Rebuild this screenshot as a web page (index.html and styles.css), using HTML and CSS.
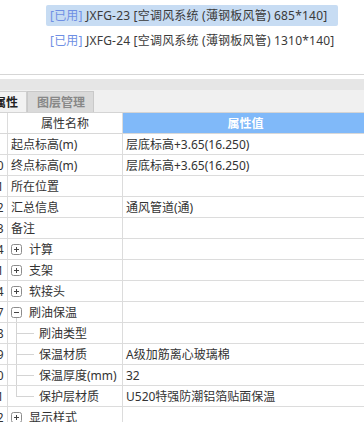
FILE: index.html
```html
<!DOCTYPE html>
<html>
<head>
<meta charset="utf-8">
<link rel="stylesheet" href="styles.css">
</head>
<body>
<div class="popup">
  <div class="list">
    <div class="item sel"><span class="tag">[已用]</span> JXFG-23 [空调风系统 (薄钢板风管) 685*140]</div>
    <div class="item"><span class="tag">[已用]</span> JXFG-24 [空调风系统 (薄钢板风管) 1310*140]</div>
  </div>
</div>
<div class="gap"></div>
<div class="band"></div>
<div class="tabs">
  <div class="tab active">属性</div>
  <div class="tab">图层管理</div>
</div>
<div class="grid">
  <div class="row head">
    <div class="cell num"></div>
    <div class="cell hname">属性名称</div>
    <div class="cell hval">属性值</div>
  </div>
  <div class="row"><div class="cell num"><span>9</span></div><div class="cell name">起点标高(m)</div><div class="cell val">层底标高+3.65(16.250)</div></div>
  <div class="row"><div class="cell num"><span>10</span></div><div class="cell name">终点标高(m)</div><div class="cell val">层底标高+3.65(16.250)</div></div>
  <div class="row"><div class="cell num"><span>11</span></div><div class="cell name">所在位置</div><div class="cell val"></div></div>
  <div class="row"><div class="cell num"><span>12</span></div><div class="cell name">汇总信息</div><div class="cell val">通风管道(通)</div></div>
  <div class="row"><div class="cell num"><span>13</span></div><div class="cell name">备注</div><div class="cell val"></div></div>
  <div class="row"><div class="cell num"><span>14</span></div><div class="cell name"><span class="box"><svg width="11" height="11" viewBox="0 0 11 11"><rect x="0.5" y="0.5" width="10" height="10" rx="2" fill="#fff" stroke="#8c8c8c"/><path d="M3 5.5h5M5.5 3v5" stroke="#444" stroke-width="1"/></svg></span><span class="gtext">计算</span></div><div class="cell val"></div></div>
  <div class="row"><div class="cell num"><span>21</span></div><div class="cell name"><span class="box"><svg width="11" height="11" viewBox="0 0 11 11"><rect x="0.5" y="0.5" width="10" height="10" rx="2" fill="#fff" stroke="#8c8c8c"/><path d="M3 5.5h5M5.5 3v5" stroke="#444" stroke-width="1"/></svg></span><span class="gtext">支架</span></div><div class="cell val"></div></div>
  <div class="row"><div class="cell num"><span>24</span></div><div class="cell name"><span class="box"><svg width="11" height="11" viewBox="0 0 11 11"><rect x="0.5" y="0.5" width="10" height="10" rx="2" fill="#fff" stroke="#8c8c8c"/><path d="M3 5.5h5M5.5 3v5" stroke="#444" stroke-width="1"/></svg></span><span class="gtext">软接头</span></div><div class="cell val"></div></div>
  <div class="row"><div class="cell num"><span>27</span></div><div class="cell name open"><span class="box"><svg width="11" height="11" viewBox="0 0 11 11"><rect x="0.5" y="0.5" width="10" height="10" rx="2" fill="#fff" stroke="#8c8c8c"/><path d="M3 5.5h5" stroke="#444" stroke-width="1"/></svg></span><span class="gtext">刷油保温</span></div><div class="cell val"></div></div>
  <div class="row"><div class="cell num"><span>28</span></div><div class="cell name child"><span class="branch"></span>刷油类型</div><div class="cell val"></div></div>
  <div class="row"><div class="cell num"><span>29</span></div><div class="cell name child"><span class="branch"></span>保温材质</div><div class="cell val">A级加筋离心玻璃棉</div></div>
  <div class="row"><div class="cell num"><span>30</span></div><div class="cell name child"><span class="branch"></span>保温厚度(mm)</div><div class="cell val">32</div></div>
  <div class="row"><div class="cell num"><span>31</span></div><div class="cell name child last"><span class="branch"></span>保护层材质</div><div class="cell val">U520特强防潮铝箔贴面保温</div></div>
  <div class="row"><div class="cell num"><span>32</span></div><div class="cell name"><span class="box"><svg width="11" height="11" viewBox="0 0 11 11"><rect x="0.5" y="0.5" width="10" height="10" rx="2" fill="#fff" stroke="#8c8c8c"/><path d="M3 5.5h5M5.5 3v5" stroke="#444" stroke-width="1"/></svg></span><span class="gtext">显示样式</span></div><div class="cell val"></div></div>
</div>
</body>
</html>
```

FILE: styles.css
```css
html, body {
  margin: 0;
  padding: 0;
  background: #fff;
  overflow: hidden;
}
body {
  font-family: "Noto Sans", "Noto Sans CJK SC", sans-serif;
  font-size: 12px;
  color: #333;
}
.popup {
  height: 75px;
  box-sizing: border-box;
  padding: 5px 0 0 46px;
  border-bottom: 1px solid #d6d6d6;
}
.list {
  display: inline-flex;
  flex-direction: column;
  gap: 4px;
}
.item {
  height: 21px;
  line-height: 21px;
  padding: 0 4px;
  border-radius: 2px;
  white-space: nowrap;
  color: #3a3a3a;
  letter-spacing: 0.2px;
}
.item.sel {
  background: #c7dcf3;
}
.tag {
  color: #6f8fe4;
}
.gap {
  height: 4px;
}
.band {
  height: 11px;
  background: #e6e6e6;
}
.tabs {
  display: flex;
  height: 23px;
  box-sizing: border-box;
  background: #f0f0f0;
  border-bottom: 1px solid #d4d4d4;
}
.tab {
  display: flex;
  align-items: center;
  font-weight: bold;
  color: #888;
  background: #dadada;
  border: 1px solid #c9c9c9;
  border-bottom: none;
  padding: 0 8px 0 9px;
  margin-top: 1px;
}
.tab.active {
  background: #f2f2f2;
  color: #222;
  margin-left: -10px;
  padding: 0 8px 0 3px;
  border-color: #cfcfcf;
  border-right: 1px solid #cfcfcf;
}
.row {
  display: grid;
  grid-template-columns: 8px 115px 1fr;
  height: 21px;
  box-sizing: border-box;
  border-bottom: 1px solid #dcdcdc;
}
.cell {
  border-right: 1px solid #dcdcdc;
  overflow: hidden;
  white-space: nowrap;
  display: flex;
  align-items: center;
  min-width: 0;
}
.cell:last-child {
  border-right: none;
}
.num span {
  margin-left: -10px;
}
.name {
  padding-left: 3px;
}
.val {
  padding-left: 3px;
}
.head .hname {
  justify-content: center;
}
.head .hval {
  justify-content: center;
  background: #80b9f9;
  color: #fff;
  font-weight: bold;
  padding-left: 4px;
}
.head {
  border-bottom-color: #d8d8d8;
}
.box {
  display: flex;
  width: 11px;
  height: 11px;
  margin-left: 0;
  margin-right: 7px;
  position: relative;
}
.box svg {
  display: block;
}
.open .box::after {
  content: "";
  position: absolute;
  left: 5px;
  top: 11px;
  width: 1px;
  height: 8px;
  background: #d4d4d4;
}
.child {
  padding-left: 8px;
  align-self: stretch;
  align-items: center;
}
.branch {
  align-self: stretch;
  width: 18px;
  margin-right: 5px;
  position: relative;
  flex: none;
}
.branch::before {
  content: "";
  position: absolute;
  left: 0;
  top: 0;
  bottom: 0;
  width: 1px;
  background: #d4d4d4;
}
.last .branch::before {
  bottom: 50%;
}
.branch::after {
  content: "";
  position: absolute;
  left: 0;
  top: 50%;
  width: 18px;
  height: 1px;
  background: #d4d4d4;
}
```
